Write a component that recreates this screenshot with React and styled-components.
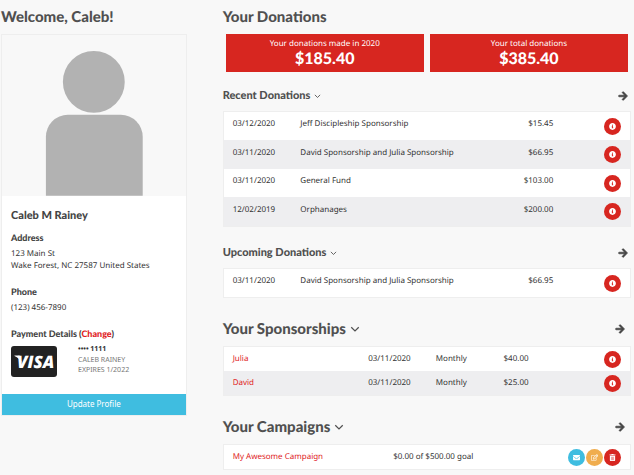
import React from "react";
import styled, { createGlobalStyle } from "styled-components";
import {
    FaArrowRight,
    FaEnvelope,
    FaInfoCircle,
    FaRegEdit,
    FaTrashAlt,
} from "react-icons/fa";

const recentDonations = [
    { date: "03/12/2020", name: "Jeff Discipleship Sponsorship", amount: "$15.45" },
    { date: "03/11/2020", name: "David Sponsorship and Julia Sponsorship", amount: "$66.95" },
    { date: "03/11/2020", name: "General Fund", amount: "$103.00" },
    { date: "12/02/2019", name: "Orphanages", amount: "$200.00" },
];

const upcomingDonations = [
    { date: "03/11/2020", name: "David Sponsorship and Julia Sponsorship", amount: "$66.95" },
];

const sponsorships = [
    { name: "Julia", date: "03/11/2020", frequency: "Monthly", amount: "$40.00" },
    { name: "David", date: "03/11/2020", frequency: "Monthly", amount: "$25.00" },
];

const Chevron = () => (
    <svg viewBox="0 0 12 8" aria-hidden="true">
        <path d="M1.5 1.5 L6 6 L10.5 1.5" fill="none" stroke="currentColor" strokeWidth="1.5" />
    </svg>
);

const Avatar = () => (
    <AvatarSvg viewBox="0 0 184 161" role="img" aria-label="Profile photo">
        <circle cx="92" cy="47" r="31" />
        <path d="M44 161 V102 A22 22 0 0 1 66 80 H119 A22 22 0 0 1 141 102 V161 Z" />
    </AvatarSvg>
);

const VisaCard = () => (
    <VisaSvg viewBox="0 0 46 31" role="img" aria-label="Visa">
        <rect width="46" height="31" rx="3" fill="#222" />
        <path d="M3.5 9.5 H8 Q9 9.5 9.3 10.6 L10.6 17 Q8.5 12 3.5 9.9 Z" fill="#fff" />
        <text x="6" y="22" fill="#fff">
            VISA
        </text>
    </VisaSvg>
);

const SectionHeader = ({ title, large }) => (
    <Header $large={large}>
        <Title $large={large}>
            {title}
            <Toggle type="button" aria-label={`Toggle ${title}`} $large={large}>
                <Chevron />
            </Toggle>
        </Title>
        <MoreLink href="#" aria-label={`View all ${title}`}>
            <FaArrowRight />
        </MoreLink>
    </Header>
);

const DonationTable = ({ donations }) => (
    <Table>
        <colgroup>
            <Col $size={16.66} />
            <Col $size={50} />
            <Col $size={16.66} />
            <Col $size={16.66} />
        </colgroup>
        <tbody>
            {donations.map((donation) => (
                <Row key={donation.date + donation.name} $tall>
                    <Cell $tall>{donation.date}</Cell>
                    <Cell $tall>{donation.name}</Cell>
                    <Cell $tall $right>{donation.amount}</Cell>
                    <Cell>
                        <Actions>
                            <RoundButton type="button" aria-label="Details">
                                <FaInfoCircle />
                            </RoundButton>
                        </Actions>
                    </Cell>
                </Row>
            ))}
        </tbody>
    </Table>
);

const App = () => {
    return (
        <Page>
            <GlobalStyle />
            <Column>
                <PageTitle>Welcome, Caleb!</PageTitle>
                <ProfileCard>
                    <Avatar />
                    <ProfileBody>
                        <ProfileName>Caleb M Rainey</ProfileName>
                        <Label>Address</Label>
                        <Info>
                            123 Main St
                            <br />
                            Wake Forest, NC 27587 United States
                        </Info>
                        <Label>Phone</Label>
                        <Info>(123) 456-7890</Info>
                        <Label>
                            Payment Details (<TextLink href="#">Change</TextLink>)
                        </Label>
                        <Payment>
                            <VisaCard />
                            <CardInfo>
                                <strong>•••• 1111</strong>
                                <span>CALEB RAINEY</span>
                                <span>EXPIRES 1/2022</span>
                            </CardInfo>
                        </Payment>
                    </ProfileBody>
                    <UpdateButton type="button">Update Profile</UpdateButton>
                </ProfileCard>
            </Column>

            <Column>
                <PageTitle>Your Donations</PageTitle>
                <Totals>
                    <Total>
                        <span>Your donations made in 2020</span>
                        <strong>$185.40</strong>
                    </Total>
                    <Total>
                        <span>Your total donations</span>
                        <strong>$385.40</strong>
                    </Total>
                </Totals>

                <SectionHeader title="Recent Donations" />
                <DonationTable donations={recentDonations} />

                <SectionHeader title="Upcoming Donations" />
                <DonationTable donations={upcomingDonations} />

                <SectionHeader title="Your Sponsorships" large />
                <Table>
                    <colgroup>
                        <Col $size={33.33} />
                        <Col $size={16.66} />
                        <Col $size={16.66} />
                        <Col $size={16.66} />
                        <Col $size={16.66} />
                    </colgroup>
                    <tbody>
                        {sponsorships.map((item) => (
                            <Row key={item.name}>
                                <Cell>
                                    <TextLink href="#">{item.name}</TextLink>
                                </Cell>
                                <Cell>{item.date}</Cell>
                                <Cell>{item.frequency}</Cell>
                                <Cell>{item.amount}</Cell>
                                <Cell>
                                    <Actions>
                                        <RoundButton type="button" aria-label="Details">
                                            <FaInfoCircle />
                                        </RoundButton>
                                    </Actions>
                                </Cell>
                            </Row>
                        ))}
                    </tbody>
                </Table>

                <SectionHeader title="Your Campaigns" large />
                <Table>
                    <colgroup>
                        <Col $size={39.5} />
                        <Col $size={35.5} />
                        <Col $size={25} />
                    </colgroup>
                    <tbody>
                        <Row>
                            <Cell>
                                <TextLink href="#">My Awesome Campaign</TextLink>
                            </Cell>
                            <Cell>$0.00 of $500.00 goal</Cell>
                            <Cell>
                                <Actions>
                                    <RoundButton type="button" aria-label="Email" $color="#3fbde0">
                                        <FaEnvelope />
                                    </RoundButton>
                                    <RoundButton type="button" aria-label="Edit" $color="#f0ad4e">
                                        <FaRegEdit />
                                    </RoundButton>
                                    <RoundButton type="button" aria-label="Delete">
                                        <FaTrashAlt />
                                    </RoundButton>
                                </Actions>
                            </Cell>
                        </Row>
                    </tbody>
                </Table>
            </Column>
        </Page>
    );
};

export default App;

const GlobalStyle = createGlobalStyle`
    * {
        box-sizing: border-box;
    }
    body {
        margin: 0;
        background: #f8f8f8;
        color: #333;
        font-family: "Noto Sans", sans-serif;
        font-size: 8px;
        line-height: 12px;
        text-rendering: geometricPrecision;
    }
    h1, h2, h3, p {
        margin: 0;
    }
    button {
        padding: 0;
        border: 0;
        font: inherit;
        cursor: pointer;
    }
`;

const Page = styled.main`
    display: grid;
    grid-template-columns: 5fr 11fr;
    align-items: start;
    gap: 36px;
    padding: 6px 3px 6px 1px;
`;
const Column = styled.div`
    min-width: 0;
`;
const PageTitle = styled.h1`
    margin-bottom: 6px;
    color: #505050;
    font-family: Lato, sans-serif;
    font-size: 15px;
    font-weight: 900;
    line-height: 22px;
`;

// profile card
const ProfileCard = styled.section`
    border: 1px solid #eee;
    background: #fff;
`;
const AvatarSvg = styled.svg`
    display: block;
    width: 100%;
    background: #f8f8f8;
    fill: #b2b2b2;
`;
const ProfileBody = styled.div`
    padding: 12px 9px 17px;
`;
const ProfileName = styled.h2`
    margin-bottom: 8px;
    color: #444;
    font-family: Lato, sans-serif;
    font-size: 11px;
    font-weight: 900;
    line-height: 16px;
`;
const Label = styled.h3`
    margin-bottom: 4px;
    color: #444;
    font-family: Lato, sans-serif;
    font-size: 9px;
    font-weight: 900;
    line-height: 12px;
`;
const Info = styled.p`
    margin-bottom: 14px;
`;
const TextLink = styled.a`
    color: #e01b24;
    text-decoration: none;
`;
const Payment = styled.div`
    display: flex;
    align-items: flex-start;
    gap: 21px;
    padding-top: 2px;
`;
const VisaSvg = styled.svg`
    flex: none;
    width: 46px;
    height: 31px;
    text {
        font-family: "Open Sans", sans-serif;
        font-size: 17px;
        font-style: italic;
        font-weight: 800;
    }
`;
const CardInfo = styled.div`
    display: flex;
    flex-direction: column;
    color: #777;
    font-size: 7px;
    line-height: 10px;
    strong {
        color: #333;
        line-height: 8px;
        margin-bottom: 2px;
    }
`;
const UpdateButton = styled.button`
    display: block;
    width: 100%;
    height: 21px;
    background: #3fbde0;
    color: #fff;
`;

// donation totals
const Totals = styled.div`
    display: grid;
    grid-template-columns: 1fr 1fr;
    gap: 6px;
    padding: 0 3px;
`;
const Total = styled.div`
    display: flex;
    flex-direction: column;
    align-items: center;
    padding: 4px 0;
    background: #d72620;
    color: #fff;
    strong {
        font-family: Lato, sans-serif;
        font-size: 16px;
        font-weight: 900;
        line-height: 18px;
    }
`;

// section headers
const Header = styled.div`
    display: flex;
    align-items: center;
    justify-content: space-between;
    padding: ${({ $large }) => ($large ? "18px 6px 6px 0" : "16px 3px 7px 0")};
`;
const Title = styled.h2`
    display: flex;
    align-items: center;
    gap: 4px;
    color: #505050;
    font-family: Lato, sans-serif;
    font-size: ${({ $large }) => ($large ? 15 : 11)}px;
    font-weight: 900;
    line-height: ${({ $large }) => ($large ? 22 : 16)}px;
`;
const Toggle = styled.button`
    width: ${({ $large }) => ($large ? 10 : 7)}px;
    background: none;
    color: inherit;
    svg {
        display: block;
        width: 100%;
    }
`;
const MoreLink = styled.a`
    display: flex;
    color: #444;
    font-size: 10px;
    svg {
        stroke: currentColor;
        stroke-width: 36px;
    }
`;

// tables
const Table = styled.table`
    width: 100%;
    margin-bottom: 2px;
    table-layout: fixed;
    border: 1px solid #eee;
    border-collapse: separate;
    border-spacing: 0;
    background: #fff;
`;
const Col = styled.col`
    width: ${({ $size }) => $size}%;
`;
const Row = styled.tr`
    height: ${({ $tall }) => ($tall ? 28 : 24)}px;
    &:nth-child(even) {
        height: ${({ $tall }) => ($tall ? 29 : 24)}px;
        background: #eeeef0;
    }
`;
const Cell = styled.td`
    padding: ${({ $tall }) => ($tall ? "0 9px 4px" : "0 9px")};
    text-align: ${({ $right }) => ($right ? "right" : "left")};
    vertical-align: middle;
    white-space: nowrap;
`;
const Actions = styled.div`
    display: flex;
    justify-content: flex-end;
    gap: 1px;
`;
const RoundButton = styled.button`
    display: flex;
    align-items: center;
    justify-content: center;
    width: 17px;
    height: 17px;
    border-radius: 50%;
    background: ${({ $color }) => $color || "#d72620"};
    color: #fff;
    font-size: 7px;
`;
